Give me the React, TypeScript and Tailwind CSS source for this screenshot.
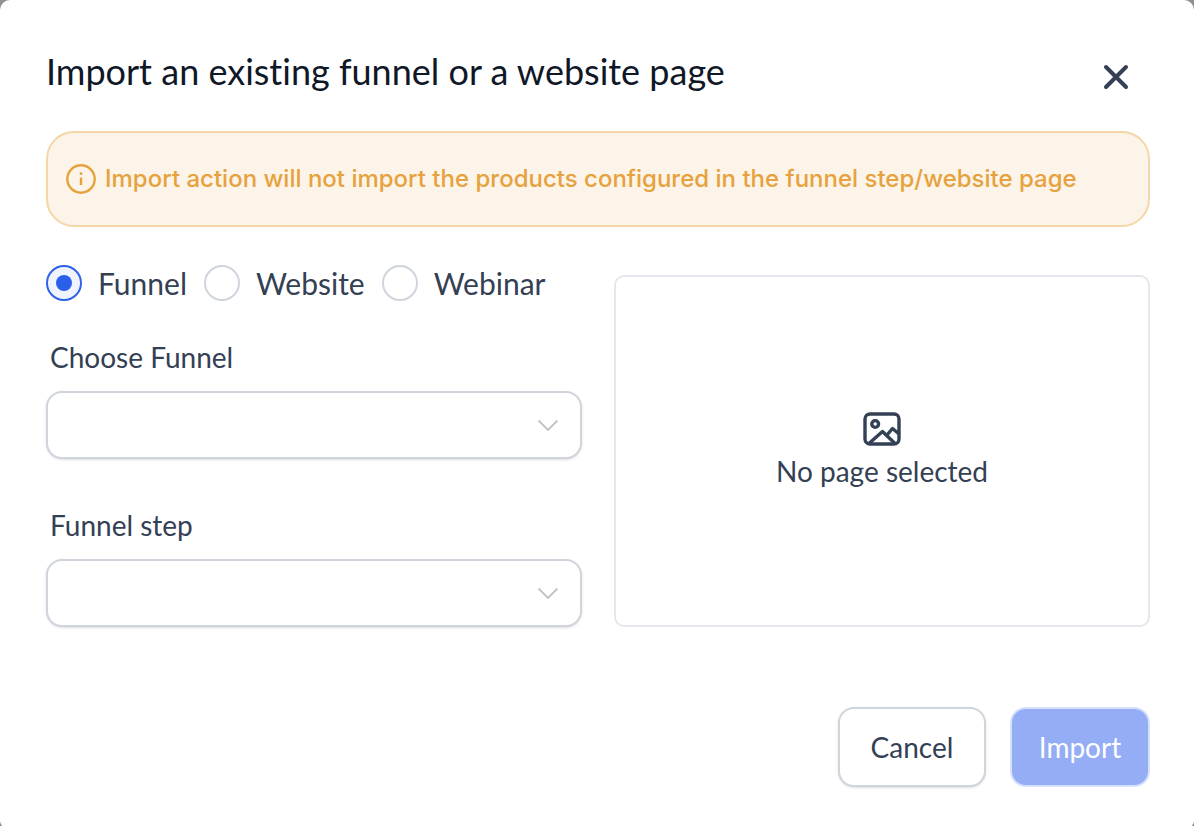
import React, { useState } from "react";

const sources = ["Funnel", "Website", "Webinar"];

interface SelectFieldProps {
  id: string;
  label: string;
}

const SelectField = ({ id, label }: SelectFieldProps) => {
  return (
    <div className="flex flex-col gap-4">
      <label htmlFor={id} className="pl-1 text-[28px] leading-9">
        {label}
      </label>
      <div className="relative">
        <select
          id={id}
          className="block h-[68px] w-full appearance-none rounded-2xl border-2 border-[#d0d5dd] bg-white pl-6 pr-16 text-[28px] shadow-sm outline-none"
        />
        <svg
          className="pointer-events-none absolute right-[22px] top-7 h-3 w-6"
          viewBox="0 0 24 12"
          fill="none"
          stroke="#c2c2c2"
          strokeWidth="1.800"
        >
          <path d="M2.500 1.500l9.500 9.500L21.500 1.500" />
        </svg>
      </div>
    </div>
  );
};

const InfoIcon = () => (
  <svg className="h-[30px] w-[30px] shrink-0" viewBox="0 0 30 30" fill="none">
    <circle cx="15" cy="15" r="13.700" stroke="currentColor" strokeWidth="2.400" />
    <path d="M15 13.500V21" stroke="currentColor" strokeWidth="2.400" />
    <circle cx="15" cy="9.700" r="1.400" fill="currentColor" />
  </svg>
);

const CloseIcon = () => (
  <svg
    className="h-7 w-7"
    viewBox="0 0 28 28"
    fill="none"
    stroke="currentColor"
    strokeWidth="4"
    strokeLinecap="round"
  >
    <path d="M4 4l20 20M24 4L4 24" />
  </svg>
);

const ImageIcon = () => (
  <svg
    className="h-9 w-10"
    viewBox="0 0 40 36"
    fill="none"
    stroke="currentColor"
    strokeWidth="3.400"
    strokeLinejoin="round"
    strokeLinecap="round"
  >
    <rect x="3" y="3" width="34" height="30" rx="5" />
    <circle cx="13.200" cy="13" r="3.400" />
    <path d="M7.500 32L20.500 20.500L32.500 32" />
    <path d="M25 24L30.500 17.500L36.500 22.500" />
  </svg>
);

const App = () => {
  const [source, setSource] = useState("Funnel");

  return (
    <div className="min-h-screen bg-[#8f9096] font-['Lato',sans-serif] text-[#344054] [font-variant-ligatures:none]">
      <div className="flex min-h-screen flex-col rounded-t-[10px] rounded-b-[6px] bg-white pb-10 pl-[46px] pr-11 pt-[51px]">
        <header className="flex items-center justify-between">
          <h1 className="text-4xl text-[#101828]">
            Import an existing funnel or a website page
          </h1>
          <button type="button" aria-label="Close" className="mr-5 pt-3">
            <CloseIcon />
          </button>
        </header>

        <div className="mt-10 flex min-h-24 items-center gap-[9px] rounded-[28px] border-2 border-[#f5d6a6] bg-[#fcf3e9] px-[18px] text-[#e6a23c]">
          <InfoIcon />
          <p className="font-['Inter',sans-serif] text-2xl font-medium">
            Import action will not import the products configured in the funnel
            step/website page
          </p>
        </div>

        <div className="mt-[38px] grid grid-cols-2 gap-8">
          <div className="flex flex-col">
            <div role="radiogroup" aria-label="Source" className="flex gap-[17px]">
              {sources.map((item) => (
                <label
                  key={item}
                  className="flex h-9 items-center gap-4 text-[30px]"
                >
                  <input
                    type="radio"
                    name="source"
                    value={item}
                    checked={source === item}
                    onChange={() => setSource(item)}
                    className="grid h-9 w-9 shrink-0 appearance-none place-content-center rounded-full border-2 border-[#d0d5dd] bg-white before:h-4 before:w-4 before:rounded-full checked:border-[#2f62eb] checked:bg-[#eff4ff] checked:before:bg-[#2a5fea]"
                  />
                  {item}
                </label>
              ))}
            </div>
            <div className="mt-[38px] flex flex-col gap-12">
              <SelectField id="funnel" label="Choose Funnel" />
              <SelectField id="funnel-step" label="Funnel step" />
            </div>
          </div>

          <div className="mt-2.5 flex flex-col items-center justify-center gap-1 rounded-[10px] border-2 border-[#e4e7ec]">
            <ImageIcon />
            <p className="text-[28px] leading-10">No page selected</p>
          </div>
        </div>

        <footer className="mt-20 flex justify-end gap-6 text-[28px]">
          <button
            type="button"
            className="h-20 min-w-[148px] rounded-2xl border-2 border-[#d0d5dd] bg-white px-7 shadow-sm"
          >
            Cancel
          </button>
          <button
            type="button"
            disabled
            className="h-20 min-w-[140px] rounded-2xl border-2 border-[#d5e0fc] bg-[#95adf4] px-6 text-white"
          >
            Import
          </button>
        </footer>
      </div>
    </div>
  );
};

export default App;
